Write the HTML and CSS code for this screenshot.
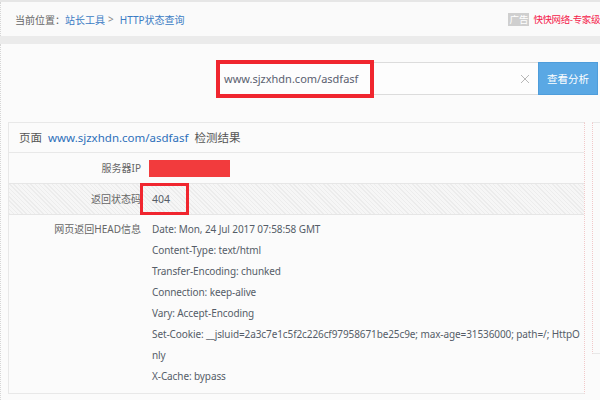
FILE: index.html
```html
<!DOCTYPE html>
<html lang="zh-CN">
<head>
<meta charset="utf-8">
<title>HTTP状态查询</title>
<link rel="stylesheet" href="styles.css">
</head>
<body>
<div class="top-strip"></div>
<header class="header">
  <nav class="crumbs">
    <span class="crumb-label">当前位置：</span>
    <a class="crumb-link" href="#">站长工具</a>
    <span class="crumb-sep">&gt;</span>
    <a class="crumb-link" href="#">HTTP状态查询</a>
  </nav>
  <div class="ad">
    <span class="ad-tag">广告</span>
    <span class="ad-text">快快网络-专家级</span>
  </div>
</header>
<main class="main">
  <div class="search">
    <div class="search-input">
      <span class="search-text">www.sjzxhdn.com/asdfasf</span>
      <span class="mark mark-url"></span>
      <svg class="clear" width="10" height="10" viewBox="0 0 10 10"><path d="M1 1L9 9M9 1L1 9" stroke="#b8b8b8" stroke-width="1" fill="none"/></svg>
    </div>
    <button class="search-btn">查看分析</button>
  </div>
  <div class="panels">
    <section class="panel">
      <h2 class="panel-title">页面 <span class="title-url">www.sjzxhdn.com/asdfasf</span> 检测结果</h2>
      <div class="row">
        <div class="label">服务器IP</div>
        <div class="value"><span class="redact"></span></div>
      </div>
      <div class="row row-hatch">
        <div class="label">返回状态码</div>
        <div class="value value-code">404<span class="mark mark-code"></span></div>
      </div>
      <div class="row row-head">
        <div class="label">网页返回HEAD信息</div>
        <div class="value value-lines">
          <p>Date: Mon, 24 Jul 2017 07:58:58 GMT</p>
          <p>Content-Type: text/html</p>
          <p>Transfer-Encoding: chunked</p>
          <p>Connection: keep-alive</p>
          <p>Vary: Accept-Encoding</p>
          <p class="wrap">Set-Cookie: __jsluid=2a3c7e1c5f2c226cf97958671be25c9e; max-age=31536000; path=/; HttpOnly</p>
          <p>X-Cache: bypass</p>
        </div>
      </div>
    </section>
    <aside class="side"></aside>
  </div>
</main>
</body>
</html>
```
FILE: styles.css
```css
html, body {
  margin: 0;
  padding: 0;
}
body {
  width: 600px;
  height: 400px;
  overflow: hidden;
  background: #ebebeb;
  font-family: "Noto Sans", "Noto Sans CJK SC", sans-serif;
  font-size: 10px;
  color: #555d68;
}
.top-strip {
  height: 2px;
  background: #e6e6e6;
}
.header {
  height: 34px;
  background: #fafafa;
  border-left: 1px dotted #d6d6d6;
  display: flex;
  align-items: center;
  justify-content: space-between;
  padding-left: 14px;
  box-sizing: border-box;
  overflow: hidden;
}
.crumbs {
  display: flex;
  align-items: center;
  font-size: 10px;
  white-space: nowrap;
}
.crumb-label {
  color: #666;
}
.crumb-link {
  color: #3a7cc4;
  text-decoration: none;
}
.crumb-sep {
  color: #888;
  margin: 0 6px 0 3px;
}
.ad {
  display: flex;
  align-items: center;
  gap: 4px;
  white-space: nowrap;
  flex: none;
}
.ad-tag {
  background: #cfcfcf;
  color: #fff;
  font-family: "Noto Sans CJK SC", sans-serif;
  font-size: 9.5px;
  padding: 0 1px;
  height: 13px;
  line-height: 13px;
}
.ad-text {
  color: #f5224a;
  font-family: "Noto Sans CJK SC", sans-serif;
  font-size: 9.5px;
  letter-spacing: -0.4px;
}
.main {
  margin-top: 8px;
  height: 356px;
  background: #fbfbfb;
  border-left: 1px dotted #d6d6d6;
  overflow: hidden;
}
.search {
  display: flex;
  justify-content: flex-end;
  padding: 18px 2px 0 0;
}
.search-input {
  position: relative;
  width: 321px;
  height: 33px;
  box-sizing: border-box;
  border: 1px solid #dcdcdc;
  border-right: none;
  background: #fdfdfd;
  display: flex;
  align-items: center;
  padding-left: 6px;
}
.search-text {
  font-size: 11px;
  color: #5a6070;
}
.clear {
  position: absolute;
  right: 8px;
  top: 11px;
}
.mark {
  position: absolute;
  border: 4px solid #f0262f;
  box-sizing: border-box;
}
.mark-url {
  left: -2px;
  top: -3px;
  width: 158px;
  height: 38px;
}
.search-btn {
  width: 60px;
  height: 33px;
  border: 1px solid #4e9ddb;
  background: #5aa8e4;
  color: #fff;
  font-family: "Noto Sans CJK SC", sans-serif;
  font-size: 10.5px;
  padding: 0;
}
.panels {
  display: flex;
  gap: 7px;
  margin-top: 27px;
  padding-left: 7px;
}
.panel {
  flex: none;
  width: 577px;
  box-sizing: border-box;
  border: 1px solid #e8e8e8;
  border-right: 1px dotted #f2c9c9;
  background: #fbfbfb;
  padding-bottom: 6px;
}
.panel-title {
  margin: 0;
  height: 29px;
  border-bottom: 1px solid #e8e8e8;
  font-weight: normal;
  font-size: 11.5px;
  color: #555;
  line-height: 29px;
  padding-left: 10px;
}
.title-url {
  color: #2d6fba;
  margin: 0 3px;
}
.row {
  display: flex;
  min-height: 30px;
  align-items: center;
}
.row-hatch {
  height: 30px;
  border-top: 1px solid #e6e6e6;
  border-bottom: 1px solid #e6e6e6;
  background: repeating-linear-gradient(45deg, #ececec 0 1px, #f6f6f6 1px 3px);
}
.row-head {
  align-items: flex-start;
  padding-top: 4px;
}
.label {
  flex: none;
  width: 132px;
  text-align: right;
  color: #666;
  line-height: 21px;
}
.value {
  position: relative;
  margin-left: 11px;
  line-height: 21px;
  flex: 1;
}
.redact {
  display: block;
  width: 81px;
  height: 17px;
  background: #f23b3d;
  margin-left: -3px;
}
.value-code {
  font-size: 10.5px;
}
.mark-code {
  left: -12px;
  top: -6px;
  width: 49px;
  height: 32px;
  border-width: 3px;
}
.value-lines p {
  margin: 0;
  line-height: 21px;
  letter-spacing: -0.1px;
}
.wrap {
  word-break: break-all;
  padding-right: 3px;
}
.side {
  flex: none;
  width: 40px;
  height: 230px;
  border-top: 1px solid #e8e8e8;
  border-left: 1px dotted #f2c9c9;
  border-bottom: 1px solid #e8e8e8;
  background: #fbfbfb;
}
```
